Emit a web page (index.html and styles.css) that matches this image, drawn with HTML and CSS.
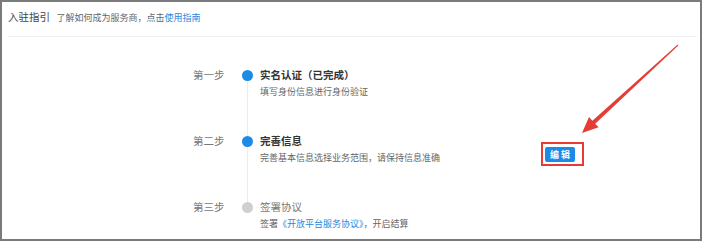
FILE: index.html
```html
<!DOCTYPE html>
<html lang="zh-CN">
	<head>
		<meta charset="utf-8">
		<title>入驻指引</title>
		<link rel="stylesheet" href="styles.css">
	</head>
	<body>
		<div id="main">
			<div class="head">
				<span class="head-title">入驻指引</span>
				<span class="head-desc">了解如何成为服务商，点击<a class="link" href="#">使用指南</a></span>
			</div>
			<div class="steps">
				<div class="step done">
					<div class="step-label">第一步</div>
					<div class="step-mark"><span class="dot"></span><span class="line"></span></div>
					<div class="step-body">
						<div class="step-title">实名认证（已完成）</div>
						<div class="step-desc">填写身份信息进行身份验证</div>
					</div>
				</div>
				<div class="step done">
					<div class="step-label">第二步</div>
					<div class="step-mark"><span class="dot"></span><span class="line"></span></div>
					<div class="step-body row">
						<div class="step-text">
							<div class="step-title">完善信息</div>
							<div class="step-desc">完善基本信息选择业务范围，请保持信息准确</div>
						</div>
						<div class="mark-box"><span class="btn">编 辑</span></div>
					</div>
				</div>
				<div class="step todo">
					<div class="step-label">第三步</div>
					<div class="step-mark"><span class="dot"></span></div>
					<div class="step-body">
						<div class="step-title">签署协议</div>
						<div class="step-desc">签署<a class="link" href="#">《开放平台服务协议》</a>，开启结算</div>
					</div>
				</div>
			</div>
			<!-- annotation arrow pointing at the edit button -->
			<svg class="arrow" width="702" height="241" viewBox="0 0 702 241">
				<polygon fill="#e63c36" points="678.3,45.4 595.2,123.7 598.6,127.3 582,133 589.0,117.1 592.4,120.7 677.7,44.6"/>
			</svg>
		</div>
	</body>
</html>
```

FILE: styles.css
```css
body, html {margin:0;padding:0;font-family:"Noto Sans CJK SC","Noto Sans",sans-serif;color:#666;background:#fff;}
a {text-decoration:none;}
#main {position:relative;width:702px;height:241px;box-sizing:border-box;border:2px solid #7b7b7b;overflow:hidden;}
.head {margin-left:6px;margin-right:3px;padding-top:4px;height:30px;line-height:16px;border-bottom:1px solid #efefef;white-space:nowrap;}
.head-title {font-size:10.5px;color:#444;margin-right:3px;}
.head-desc {font-size:9px;color:#666;}
.link {color:#2b86e0;}
.steps {padding-top:30px;padding-left:191px;}
.step {display:flex;height:66px;}
.step-label {width:49px;font-size:10.5px;line-height:16px;color:#777;}
.step-mark {display:flex;flex-direction:column;align-items:center;width:11px;}
.dot {display:block;width:11px;height:11px;border-radius:50%;margin-top:3px;background:#1a8ce8;flex-shrink:0;}
.todo .dot {background:#cfcfcf;}
.line {display:block;width:1px;flex:1;background:#ececec;margin-bottom:-3px;}
.step-body {display:flex;flex-direction:column;margin-left:7px;}
.step-body.row {flex-direction:row;}
.step-title {font-size:10.5px;line-height:16px;font-weight:bold;color:#333;}
.todo .step-title {font-weight:normal;color:#777;}
.step-desc {font-size:9px;line-height:14px;margin-top:2px;color:#666;white-space:nowrap;}
.step-text {width:281px;}
.mark-box {align-self:flex-start;margin-top:9px;border:2px solid #e63c36;padding:3px 7px 2px 2px;}
.btn {display:block;width:30px;height:15px;line-height:15px;text-align:center;font-size:9px;font-weight:bold;color:#fff;background:#1a8ce8;border-radius:2px;}
.arrow {position:absolute;left:-2px;top:-2px;pointer-events:none;}
```
